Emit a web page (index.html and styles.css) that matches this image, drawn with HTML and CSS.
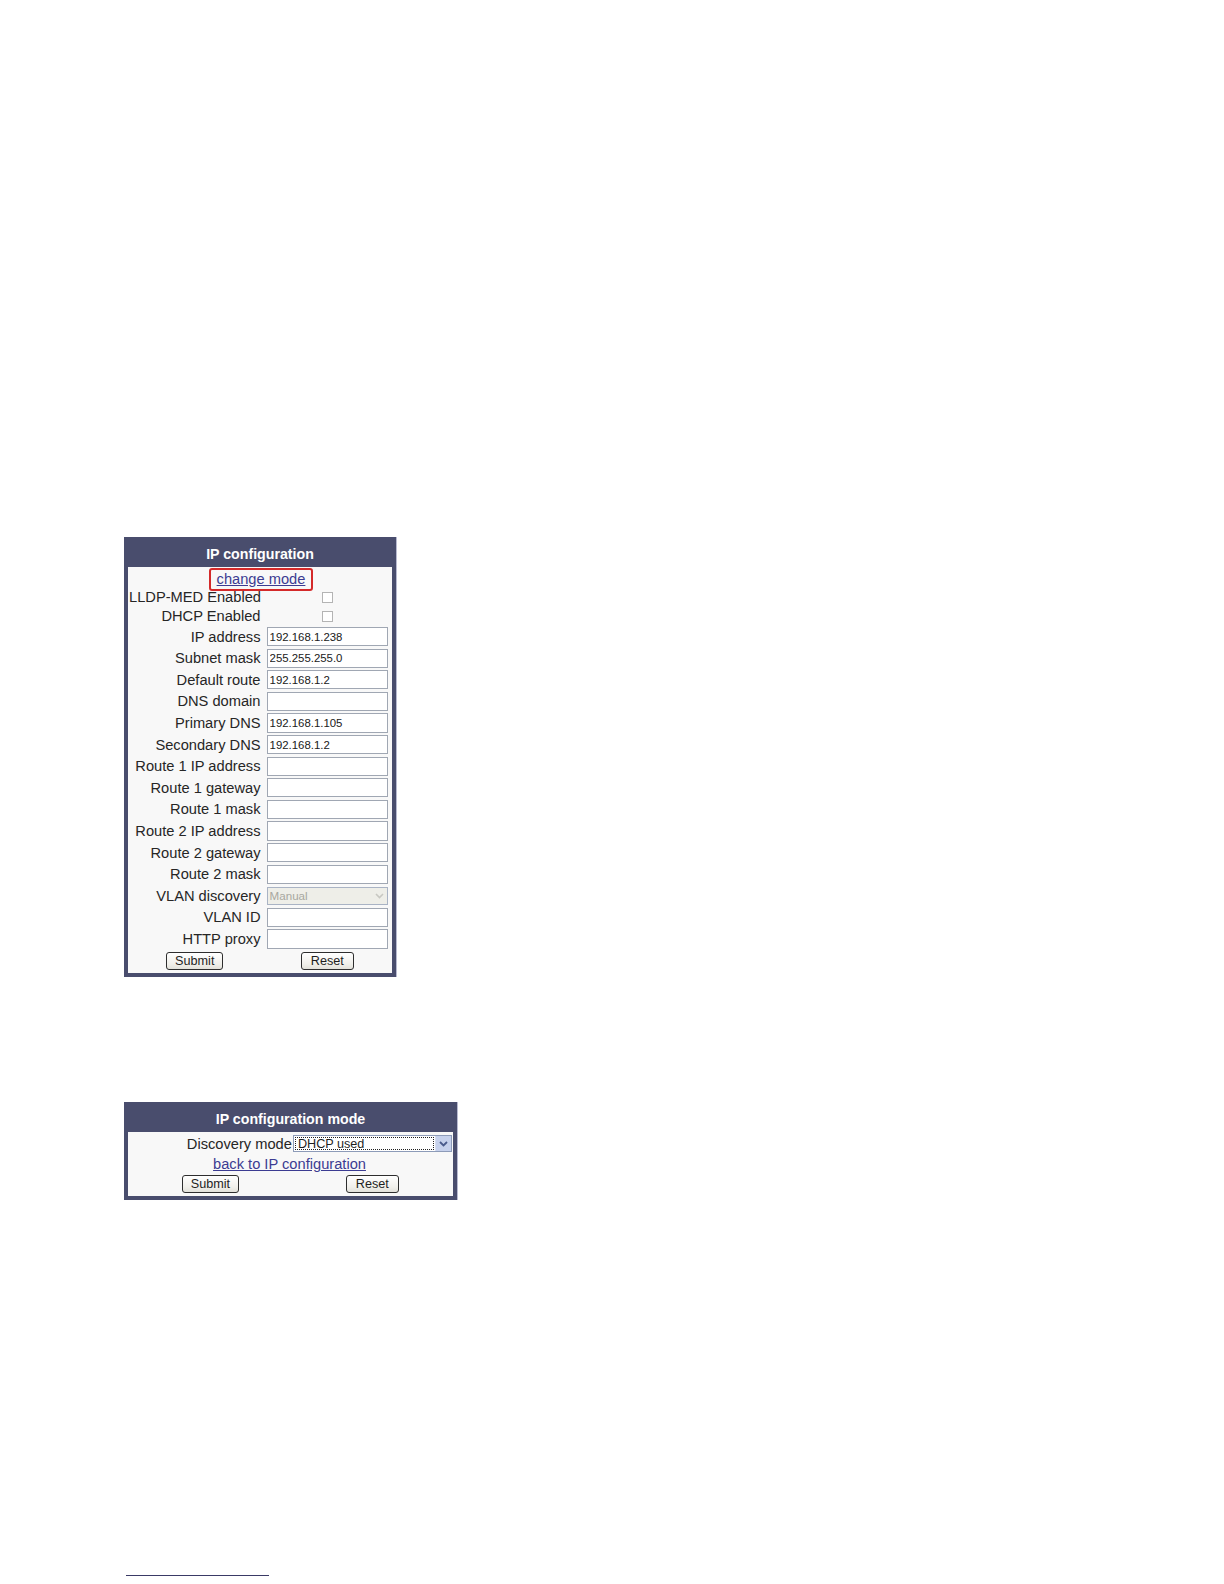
FILE: index.html
```html
<!DOCTYPE html>
<html>
<head>
<meta charset="utf-8">
<title>IP configuration</title>
<link rel="stylesheet" href="styles.css">
</head>
<body>
<div class="page">
  <div class="panel panel-config">
    <div class="panel-head">IP configuration</div>
    <div class="panel-body">
      <div class="row row-link"><span class="mode-box"><a class="link" href="#">change mode</a></span></div>
      <div class="row row-check"><span class="label">LLDP-MED Enabled</span><span class="cell center"><span class="checkbox"></span></span></div>
      <div class="row row-check"><span class="label">DHCP Enabled</span><span class="cell center"><span class="checkbox"></span></span></div>
      <div class="row row-input"><span class="label">IP address</span><span class="cell"><input class="text" value="192.168.1.238"></span></div>
      <div class="row row-input"><span class="label">Subnet mask</span><span class="cell"><input class="text" value="255.255.255.0"></span></div>
      <div class="row row-input"><span class="label">Default route</span><span class="cell"><input class="text" value="192.168.1.2"></span></div>
      <div class="row row-input"><span class="label">DNS domain</span><span class="cell"><input class="text" value=""></span></div>
      <div class="row row-input"><span class="label">Primary DNS</span><span class="cell"><input class="text" value="192.168.1.105"></span></div>
      <div class="row row-input"><span class="label">Secondary DNS</span><span class="cell"><input class="text" value="192.168.1.2"></span></div>
      <div class="row row-input"><span class="label">Route 1 IP address</span><span class="cell"><input class="text" value=""></span></div>
      <div class="row row-input"><span class="label">Route 1 gateway</span><span class="cell"><input class="text" value=""></span></div>
      <div class="row row-input"><span class="label">Route 1 mask</span><span class="cell"><input class="text" value=""></span></div>
      <div class="row row-input"><span class="label">Route 2 IP address</span><span class="cell"><input class="text" value=""></span></div>
      <div class="row row-input"><span class="label">Route 2 gateway</span><span class="cell"><input class="text" value=""></span></div>
      <div class="row row-input"><span class="label">Route 2 mask</span><span class="cell"><input class="text" value=""></span></div>
      <div class="row row-input"><span class="label">VLAN discovery</span><span class="cell">
        <span class="select disabled"><span class="select-text">Manual</span><span class="select-btn"><svg width="9" height="6" viewBox="0 0 9 6"><path d="M1 1 L4.5 4.5 L8 1" fill="none" stroke="currentColor" stroke-width="1.6"/></svg></span></span>
      </span></div>
      <div class="row row-input"><span class="label">VLAN ID</span><span class="cell"><input class="text" value=""></span></div>
      <div class="row row-input"><span class="label">HTTP proxy</span><span class="cell"><input class="text" value=""></span></div>
      <div class="row row-buttons"><span class="cell center"><button class="btn btn-submit">Submit</button></span><span class="cell center"><button class="btn btn-reset">Reset</button></span></div>
    </div>
  </div>

  <div class="panel panel-mode">
    <div class="panel-head">IP configuration mode</div>
    <div class="panel-body">
      <div class="row row-disc"><span class="label">Discovery mode</span><span class="cell">
        <span class="select active"><span class="select-text"><span class="focus">DHCP used</span></span><span class="select-btn"><svg width="9" height="6" viewBox="0 0 9 6"><path d="M1 1 L4.5 4.5 L8 1" fill="none" stroke="currentColor" stroke-width="1.8"/></svg></span></span>
      </span></div>
      <div class="row row-back"><a class="link" href="#">back to IP configuration</a></div>
      <div class="row row-buttons2"><span class="cell center"><button class="btn btn-submit">Submit</button></span><span class="cell center"><button class="btn btn-reset">Reset</button></span></div>
    </div>
  </div>

  <div class="footnote-rule"></div>
</div>
</body>
</html>
```

FILE: styles.css
```css
html, body {
  margin: 0;
  padding: 0;
  background: #ffffff;
}

.page {
  padding: 537px 0 0 124px;
  font-family: "Liberation Sans", Arial, sans-serif;
  color: #262626;
  height: 1584px;
  box-sizing: border-box;
}

.panel {
  background: #494d6d;
  border: 4px solid #494d6d;
  border-top-width: 1px;
  box-shadow: 1px 0 0 #b8bad0;
  box-sizing: border-box;
}

.panel-config {
  width: 272px;
}

.panel-mode {
  width: 333px;
  margin-top: 125px;
}

.panel-head {
  height: 29.3px;
  line-height: 32px;
  text-align: center;
  color: #ffffff;
  font-weight: bold;
  font-size: 14.2px;
  overflow: hidden;
}

.panel-body {
  background: #f8f8f8;
  padding: 0 4px 1px 1px;
}

.row {
  display: grid;
  align-items: center;
  font-size: 14.67px;
}

.panel-config .row {
  grid-template-columns: 131.5px 121.4px;
  column-gap: 6.1px;
}

.panel-mode .row {
  grid-template-columns: 162.9px 158.8px;
  column-gap: 1px;
}

.row-link {
  height: 20.2px;
  display: flex !important;
  justify-content: center;
  align-items: flex-start !important;
  padding-left: 5px;
}

.row-check { height: 19.2px; }
.row-input { height: 21.6px; }
.row-buttons { height: 22.25px; }

.row-disc { height: 22.4px; }
.row-back {
  height: 18px;
  display: flex !important;
  justify-content: center;
  padding-left: 1px;
}
.row-buttons2 { height: 22.4px; }

.label {
  text-align: right;
  white-space: nowrap;
  line-height: 16px;
}

.cell {
  display: flex;
  align-items: center;
}

.center {
  justify-content: center;
}

.link {
  color: #3c3c92;
  text-decoration: underline;
  line-height: 16px;
}

.mode-box {
  display: flex;
  align-items: center;
  box-sizing: border-box;
  height: 23.3px;
  margin-top: 0.3px;
  border: 2px solid #d42a2a;
  border-radius: 3px;
  padding: 0 6px 1px 6px;
  position: relative;
  z-index: 1;
}

.checkbox {
  display: inline-block;
  width: 11px;
  height: 11px;
  border: 1px solid #b4b4b4;
  background: #ffffff;
  box-sizing: border-box;
  margin-left: 1px;
}

.text {
  box-sizing: border-box;
  width: 121.4px;
  height: 19.2px;
  margin: 0;
  padding: 0 2px;
  border: 1px solid #a0a7b3;
  background: #ffffff;
  font-family: "Liberation Sans", Arial, sans-serif;
  font-size: 11.4px;
  color: #202020;
  outline: none;
}

.select {
  box-sizing: border-box;
  display: flex;
  align-items: stretch;
  height: 18.2px;
  border: 1px solid #a9b3c4;
  background: #ffffff;
  font-size: 11.6px;
}

.panel-config .select {
  width: 121.4px;
}

.panel-mode .select {
  width: 158.8px;
  height: 17.4px;
  border-color: #8d9bb8;
  font-size: 12.65px;
}

.select-text {
  flex: 1;
  display: flex;
  align-items: center;
  padding-left: 2px;
  overflow: hidden;
  white-space: nowrap;
}

.select.disabled {
  background: #eeeee8;
}

.select.disabled .select-text {
  color: #a8a8a0;
}

.select-btn {
  width: 15px;
  display: flex;
  align-items: center;
  justify-content: center;
}

.select.disabled .select-btn {
  color: #c8c8c2;
  background: #eeeee8;
}

.select.active .select-btn {
  background: #c6d1ec;
  color: #4a5b8c;
  border-left: 1px solid #d8def0;
}

.select.active .select-text {
  padding: 1px;
}

.focus {
  display: flex;
  align-items: center;
  height: 100%;
  width: 100%;
  box-sizing: border-box;
  border: 1px dotted #202020;
  padding-left: 2px;
  color: #1e1e1e;
}

.btn {
  box-sizing: border-box;
  height: 18.2px;
  padding: 0;
  border: 1px solid #2e2e2e;
  border-radius: 3px;
  background: linear-gradient(#ffffff, #f0efea 70%, #e2e1da);
  font-family: "Liberation Sans", Arial, sans-serif;
  font-size: 12.65px;
  color: #1e1e1e;
  line-height: 16px;
}

.btn-submit { width: 56.6px; }
.btn-reset { width: 52.6px; }

.footnote-rule {
  width: 143px;
  height: 1px;
  background: #3a3a66;
  margin-top: 375px;
  margin-left: 2px;
}
```
